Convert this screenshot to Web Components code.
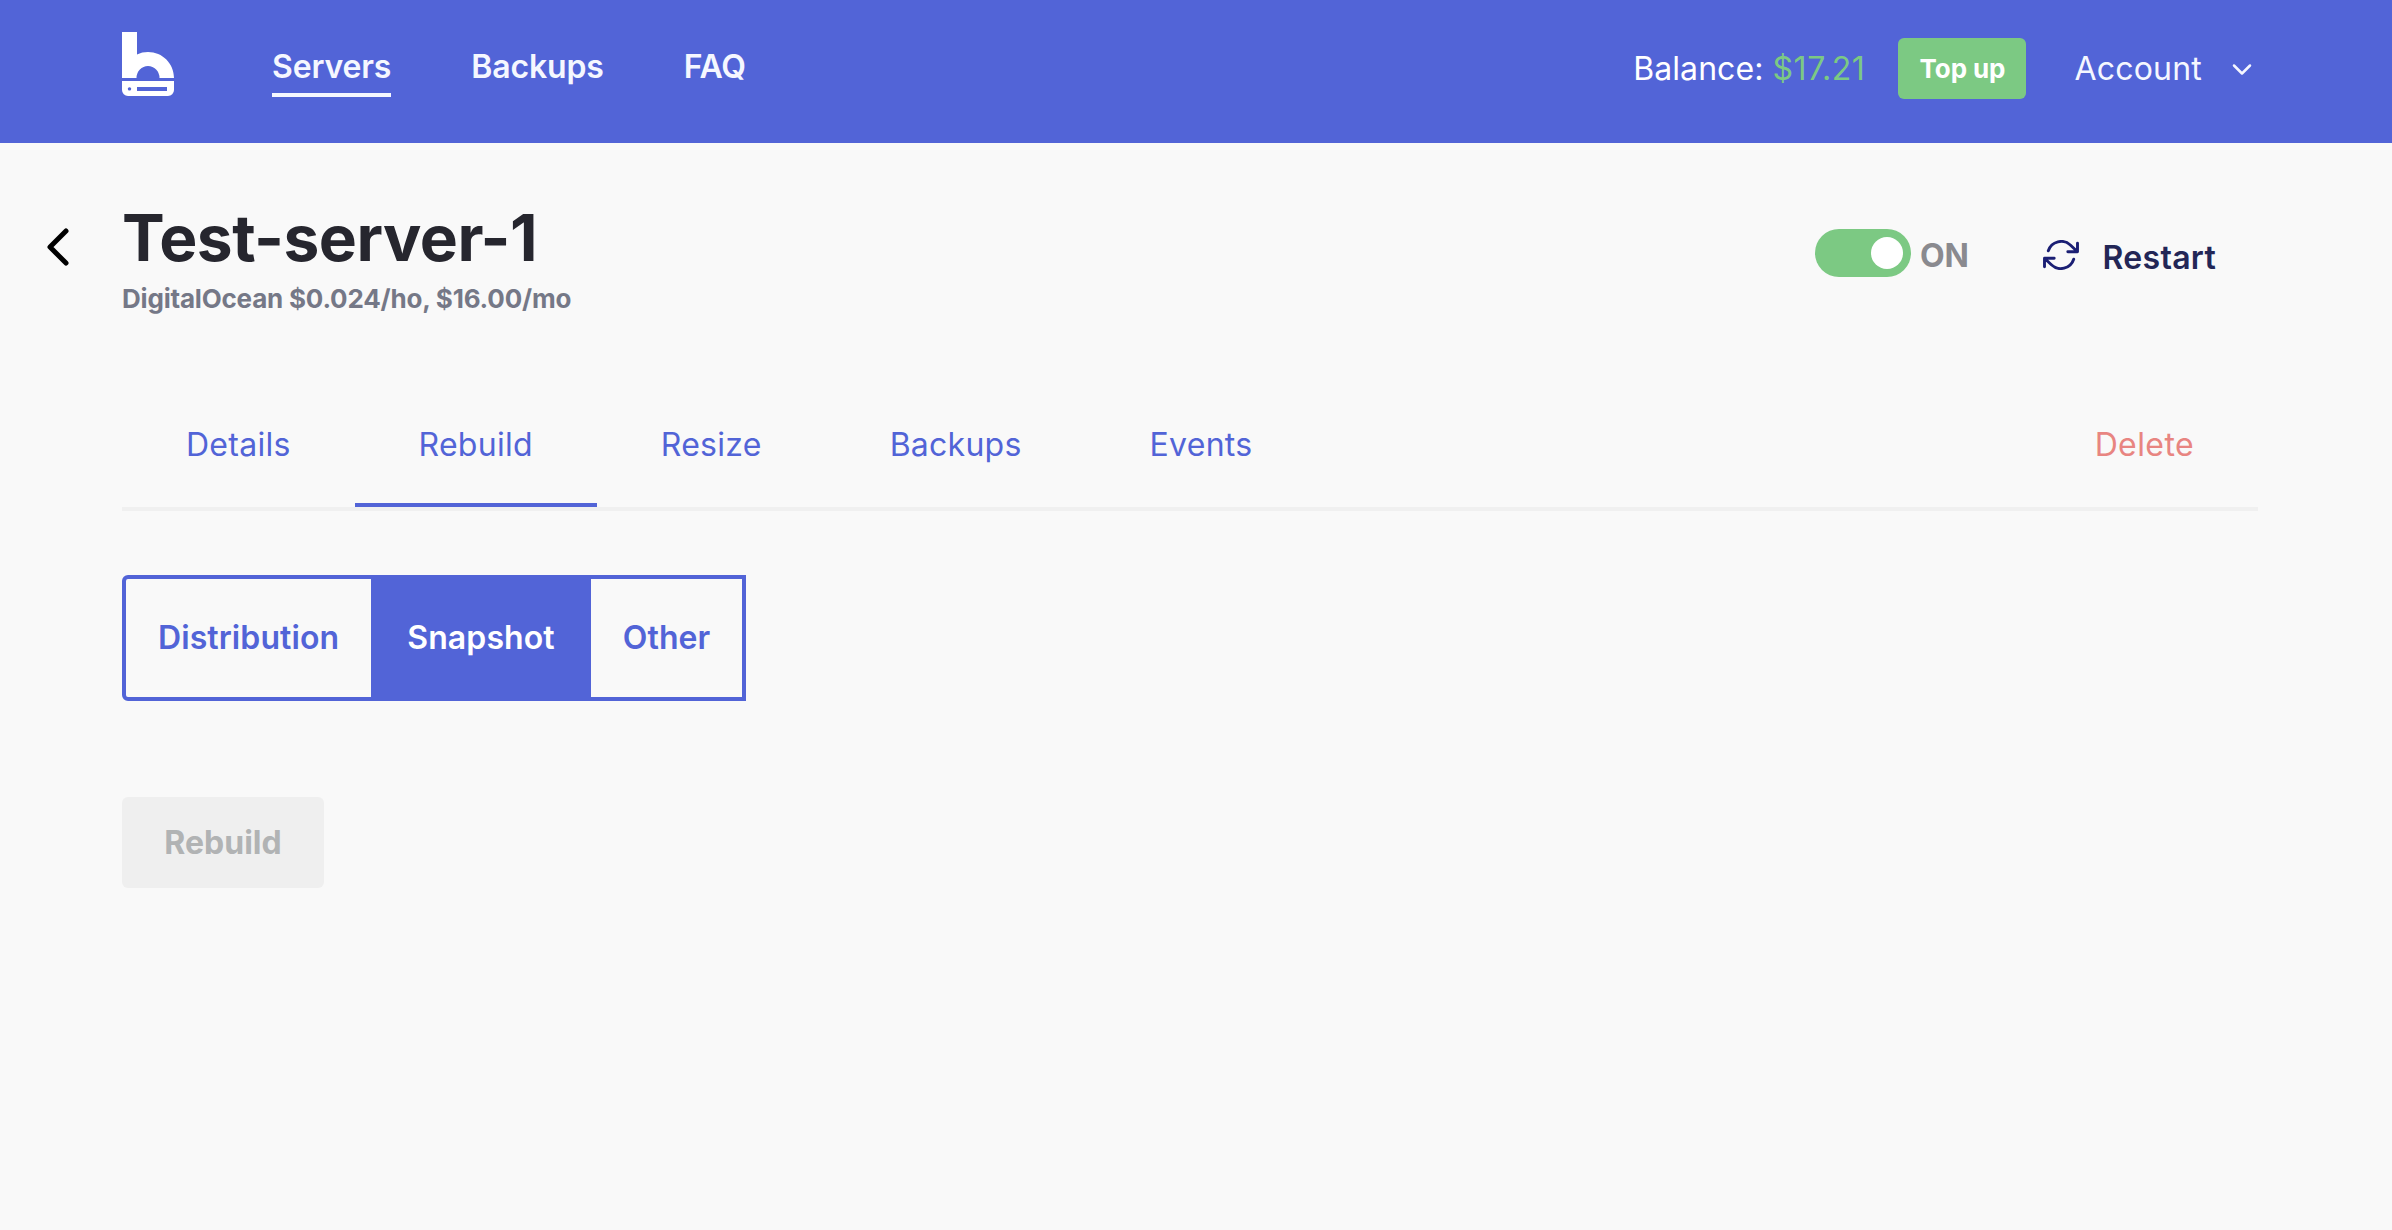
<!DOCTYPE html>
<html lang="en">
<head>
<meta charset="utf-8">
<title>Test-server-1</title>
<style>
  body {
    margin: 0;
    min-height: 100vh;
    background: #f9f9f9;
    font-family: Inter, "Liberation Sans", sans-serif;
    font-size: 32px;
    line-height: 40px;
    --primary: #5264d7;
    --success: #7cc983;
    --danger: #e88581;
    --navy: #232656;
  }
</style>
</head>
<body>
<server-page></server-page>

<script>
function define(name, html) {
  const template = document.createElement('template');
  template.innerHTML = html;

  customElements.define(name, class extends HTMLElement {
    constructor() {
      super();
      this.attachShadow({ mode: 'open' });
      this.shadowRoot.appendChild(template.content.cloneNode(true));
    }
  });
}

define('brand-logo', `
  <style>
    :host { display: block; width: 52px; height: 64px; }
    svg { display: block; }
  </style>
  <svg width="52" height="64" viewBox="0 0 52 64" fill="#fff">
    <path d="M0 0h15v22.500C18.500 20.800 22 20 26 20c14.500 0 26 11.500 26 26H37.500a11.500 12 0 0 0-23 0H0z"/>
    <path fill-rule="evenodd" d="M0 49h52v9a6 6 0 0 1-6 6H6a6 6 0 0 1-6-6zM15 55v4h30v-4zM7.500 55.200a1.700 1.700 0 1 0 .01 0z"/>
  </svg>
`);

define('nav-link', `
  <style>
    :host {
      display: block;
      padding-bottom: 6px;
      border-bottom: 4px solid transparent;
      color: #f5f7ff;
      font-weight: 600;
      letter-spacing: -0.15px;
    }
    :host([active]) { border-color: #f5f7ff; }
  </style>
  <slot></slot>
`);

define('top-up-button', `
  <style>
    :host {
      box-sizing: border-box;
      display: flex;
      align-items: center;
      justify-content: center;
      width: 128px;
      height: 61px;
      border-radius: 6px;
      background: var(--success);
      color: #fff;
      font-size: 26px;
      font-weight: 700;
      letter-spacing: -0.1px;
    }
  </style>
  <slot></slot>
`);

define('account-menu', `
  <style>
    :host { display: flex; align-items: center; gap: 30px; color: #f5f7ff; letter-spacing: 0.2px; }
    svg { display: block; }
  </style>
  <slot></slot>
  <svg width="20" height="14" viewBox="0 0 20 14" fill="none" stroke="#f5f7ff" stroke-width="2.500" stroke-linecap="round" stroke-linejoin="round">
    <path d="M2 3.500l8 8 8-8"/>
  </svg>
`);

define('app-header', `
  <style>
    :host {
      box-sizing: border-box;
      display: flex;
      align-items: flex-start;
      height: 143px;
      padding: 32px 140px 0 122px;
      background: var(--primary);
    }
    nav { display: flex; gap: 80px; margin: 15px 0 0 98px; }
    .user { display: flex; align-items: center; margin: 6px 0 0 auto; }
    .balance { color: #fff; margin-right: 33px; letter-spacing: 0.05px; }
    .amount { color: var(--success); letter-spacing: 0.6px; }
    account-menu { margin-left: 48px; }
  </style>
  <brand-logo></brand-logo>
  <nav>
    <nav-link active>Servers</nav-link>
    <nav-link>Backups</nav-link>
    <nav-link>FAQ</nav-link>
  </nav>
  <div class="user">
    <div class="balance">Balance: <span class="amount">$17.21</span></div>
    <top-up-button>Top up</top-up-button>
    <account-menu>Account</account-menu>
  </div>
`);

define('power-switch', `
  <style>
    :host { display: flex; align-items: center; gap: 9px; color: #8a8a8f; font-weight: 700; letter-spacing: -0.3px; }
    .track {
      box-sizing: border-box;
      display: flex;
      justify-content: flex-end;
      width: 96px;
      height: 48px;
      padding: 8px;
      border-radius: 24px;
      background: var(--success);
    }
    .knob { width: 32px; height: 32px; border-radius: 50%; background: #fff; }
    .label { padding-top: 5px; }
  </style>
  <div class="track"><div class="knob"></div></div>
  <div class="label"><slot></slot></div>
`);

define('restart-button', `
  <style>
    :host { display: flex; align-items: center; gap: 24px; color: var(--navy); font-weight: 600; letter-spacing: 0.3px; }
    svg { display: block; margin-bottom: 6px; }
  </style>
  <svg width="36" height="30" viewBox="0 0 36 30" fill="none" stroke="#1b1f74" stroke-width="2.900" stroke-linecap="round" stroke-linejoin="round">
    <path d="M5.300 10.800A13.600 13.600 0 0 1 27.600 5.200L34 11.300M34.500 3.200v8.600h-9.700"/>
    <path d="M30.700 19.200A13.600 13.600 0 0 1 8.400 24.800L2 18.700M1.500 26.800v-8.600h9.700"/>
  </svg>
  <slot></slot>
`);

define('server-heading', `
  <style>
    :host { display: flex; align-items: flex-start; padding: 57px 176px 0 47px; }
    .back { display: block; margin: 28px 53px 0 0; }
    h1 { margin: 0; color: #26262e; font-size: 64px; line-height: 76px; font-weight: 700; letter-spacing: -0.5px; }
    .price { margin-top: 7px; color: #757887; font-size: 26px; line-height: 32px; font-weight: 700; letter-spacing: -0.2px; }
    .actions { display: flex; align-items: flex-start; gap: 74px; margin: 29px 0 0 auto; }
    restart-button { margin-top: 9px; }
  </style>
  <svg class="back" width="22" height="38" viewBox="0 0 22 38" fill="none" stroke="#000" stroke-width="5" stroke-linecap="round" stroke-linejoin="round">
    <path d="M19 2.900L3 19l16 16.100"/>
  </svg>
  <div>
    <h1><slot></slot></h1>
    <div class="price"><slot name="price"></slot></div>
  </div>
  <div class="actions">
    <power-switch>ON</power-switch>
    <restart-button>Restart</restart-button>
  </div>
`);

define('tab-item', `
  <style>
    :host {
      display: block;
      padding: 25px 64px 38px;
      border-bottom: 4px solid transparent;
      color: var(--primary);
      letter-spacing: 0.26px;
    }
    :host([active]) { border-color: var(--primary); }
    :host([danger]) { margin-left: auto; color: var(--danger); letter-spacing: 0.4px; }
  </style>
  <slot></slot>
`);

define('tab-bar', `
  <style>
    :host { display: flex; border-bottom: 4px solid #f0f0f0; }
  </style>
  <slot></slot>
`);

define('segment-item', `
  <style>
    :host {
      padding: 39px 32px;
      color: var(--primary);
      font-weight: 600;
      letter-spacing: 0.1px;
    }
    :host([active]) { padding: 39px 36px; background: var(--primary); color: #fff; }
  </style>
  <slot></slot>
`);

define('segment-group', `
  <style>
    :host {
      display: flex;
      width: max-content;
      border: 4px solid var(--primary);
      border-radius: 6px 0 0 6px;
    }
  </style>
  <slot></slot>
`);

define('submit-button', `
  <style>
    :host {
      box-sizing: border-box;
      display: flex;
      align-items: center;
      justify-content: center;
      width: 202px;
      height: 91px;
      border-radius: 6px;
      background: #efefef;
      color: #b1b3b4;
      font-weight: 700;
    }
  </style>
  <slot></slot>
`);

define('server-page', `
  <style>
    :host { display: block; }
    main { margin: 0 134px 0 122px; }
    tab-bar { margin-top: 85px; }
    segment-group { margin-top: 64px; }
    submit-button { margin-top: 96px; }
  </style>
  <app-header></app-header>
  <server-heading>Test-server-1<span slot="price">DigitalOcean $0.024/ho, $16.00/mo</span></server-heading>
  <main>
    <tab-bar>
      <tab-item>Details</tab-item>
      <tab-item active>Rebuild</tab-item>
      <tab-item>Resize</tab-item>
      <tab-item>Backups</tab-item>
      <tab-item>Events</tab-item>
      <tab-item danger>Delete</tab-item>
    </tab-bar>
    <segment-group>
      <segment-item>Distribution</segment-item>
      <segment-item active>Snapshot</segment-item>
      <segment-item>Other</segment-item>
    </segment-group>
    <submit-button>Rebuild</submit-button>
  </main>
`);
</script>
</body>
</html>
